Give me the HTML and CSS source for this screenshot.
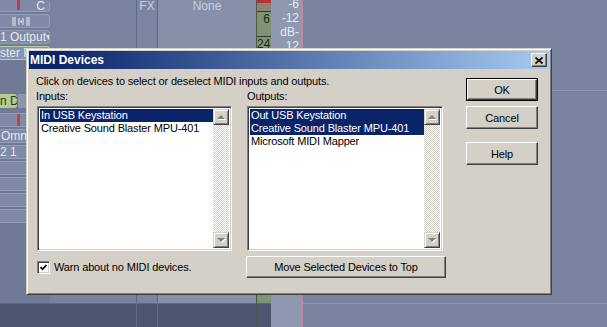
FILE: index.html
```html
<!DOCTYPE html>
<html lang="en">
<head>
    <meta charset="UTF-8">
    <title>MIDI Devices</title>
    <link rel="stylesheet" href="styles.css">
</head>
<body>
    <div class="daw">
        <div class="col strip">
            <div class="cell cell-c"><span class="rec"></span><span class="cell-txt">C</span></div>
            <div class="cell cell-icon">
                <svg width="18" height="11" viewBox="0 0 18 11"><path d="M1 1v9M3 1v9M7 2v7M11 2v7M15 1v9M17 1v9" stroke="#e6eaf2" stroke-width="1"/><rect x="8.5" y="4.5" width="1.5" height="2" fill="#e6eaf2"/></svg>
            </div>
            <div class="cell cell-out"><span>1 Output</span><span class="drop">&#9662;</span></div>
            <div class="cell cell-bus"><span>ster P</span></div>
            <div class="strip-lower">
                <div class="row-nd"><span class="pill">n D</span><span class="mini"></span></div>
                <div class="cell cell-rec"><span class="rec rec-low"></span></div>
                <div class="cell"><span class="omn">Omn</span></div>
                <div class="cell"><span>2 1</span></div>
                <div class="cell"></div>
                <div class="cell"></div>
                <div class="cell"></div>
                <div class="cell"></div>
            </div>
            <div class="fill"></div>
            <div class="foot dark"></div>
        </div>
        <div class="col plain">
            <div class="fill"></div>
            <div class="foot dark"></div>
        </div>
        <div class="col fx">
            <span class="bg-txt">FX</span>
            <div class="fill"></div>
            <div class="foot dark"></div>
        </div>
        <div class="col name">
            <span class="bg-txt">None</span>
            <div class="fill"></div>
            <div class="foot dark"></div>
        </div>
        <div class="col meter">
            <div class="peak"></div>
            <div class="seg seg-top"></div>
            <div class="seg"><span>6</span></div>
            <div class="seg"><span>24</span></div>
            <div class="fill"></div>
            <div class="foot dark"></div>
        </div>
        <div class="col scale">
            <span>-6</span>
            <span>-12</span>
            <span>dB-</span>
            <span>12</span>
        </div>
        <div class="col pink"></div>
        <div class="col rest">
            <div class="rest-top"></div>
            <div class="fill"></div>
            <div class="foot"></div>
        </div>
    </div>

    <div class="dialog">
        <div class="titlebar">
            <span class="title">MIDI Devices</span>
            <span class="close">
                <svg width="8" height="7" viewBox="0 0 8 7"><path d="M0.5 0.5l7 6M7.5 0.5l-7 6" stroke="#000" stroke-width="1.6"/></svg>
            </span>
        </div>
        <div class="dlg-body">
            <div class="main">
                <p class="hint">Click on devices to select or deselect MIDI inputs and outputs.</p>
                <div class="label">Inputs:</div>
                <div class="label label-out">Outputs:</div>
                <div class="listbox list-in">
                    <ul class="items">
                        <li class="sel">In USB Keystation</li>
                        <li>Creative Sound Blaster MPU-401</li>
                    </ul>
                    <div class="scroll">
                        <span class="arrow up"><i></i></span>
                        <span class="track"></span>
                        <span class="arrow down"><i></i></span>
                    </div>
                </div>
                <div class="listbox list-out">
                    <ul class="items">
                        <li class="sel">Out USB Keystation</li>
                        <li class="sel">Creative Sound Blaster MPU-401</li>
                        <li>Microsoft MIDI Mapper</li>
                    </ul>
                    <div class="scroll">
                        <span class="arrow up"><i></i></span>
                        <span class="track"></span>
                        <span class="arrow down"><i></i></span>
                    </div>
                </div>
                <div class="check">
                    <span class="box">
                        <svg width="7" height="7" viewBox="0 0 7 7"><path d="M0.5 3l2 2.2L6.5 1" stroke="#000" stroke-width="1.7" fill="none"/></svg>
                    </span>
                    <span>Warn about no MIDI devices.</span>
                </div>
                <div class="btn move">Move Selected Devices to Top</div>
            </div>
            <div class="side">
                <div class="btn default"><span class="btn-in">OK</span></div>
                <div class="btn">Cancel</div>
                <div class="btn help">Help</div>
            </div>
        </div>
    </div>
</body>
</html>
```

FILE: styles.css
```css
body {
    margin: 0;
    width: 607px;
    height: 327px;
    overflow: hidden;
    position: relative;
    background-color: #77839f;
    font-family: "Liberation Sans", Arial, sans-serif;
    font-size: 11px;
}

/* background: the mixer behind the dialog */
.daw {
    display: flex;
    height: 327px;
}
.col {
    display: flex;
    flex-direction: column;
    height: 327px;
}
.fill {
    flex: 1;
}
.foot {
    height: 23px;
    border-top: 1px solid #8f9ab2;
}
.foot.dark {
    background-color: #4b5670;
    border-top-color: #5e6985;
}
.bg-txt {
    color: #c9d0df;
    font-size: 12px;
    line-height: 12px;
    text-align: center;
}
.strip {
    width: 50px;
    background-color: #6f7b96;
}
.cell {
    height: 12px;
    margin-bottom: 2px;
    background-color: #7f8ba6;
    border: 1px solid #95a0b8;
    border-left: none;
    border-radius: 0 3px 3px 0;
    color: #e4e8f0;
    font-size: 12px;
    line-height: 12px;
    display: flex;
    align-items: center;
    overflow: hidden;
    white-space: nowrap;
}
.cell-c {
    height: 11px;
    border-top: none;
}
.rec {
    width: 3px;
    height: 10px;
    margin-left: 17px;
    background-color: #c0404a;
    align-self: flex-start;
}
.cell-txt {
    margin-left: auto;
    padding-right: 4px;
}
.cell-icon {
    justify-content: center;
    padding-right: 8px;
}
.drop {
    margin-left: auto;
    padding-right: 2px;
    font-size: 10px;
}
.cell-bus {
    border-color: #b6cfa2;
    background-color: #8792ac;
}
.strip-lower {
    margin-top: 32px;
    width: 26px;
    display: flex;
    flex-direction: column;
}
.strip-lower .cell {
    border-radius: 0;
    border-right: none;
}
.omn {
    padding-left: 1px;
}
.row-nd {
    display: flex;
    height: 14px;
    margin-bottom: 5px;
}
.pill {
    width: 17px;
    background-color: #b4cc94;
    border-radius: 0 3px 3px 0;
    color: #2a3a20;
    font-size: 12px;
    line-height: 14px;
    overflow: hidden;
    white-space: nowrap;
}
.mini {
    flex: 1;
    margin-left: 1px;
    background-color: #8c97af;
}
.rec-low {
    height: 13px;
}
.plain {
    width: 86px;
    border-right: 1px solid #5f6a86;
}
.fx {
    width: 20px;
    border-right: 1px solid #5f6a86;
    background-color: #7a86a1;
}
.name {
    width: 98px;
    background-color: #8690a9;
}
.meter {
    width: 14px;
    background-color: #7d9474;
    border-left: 1px solid #4c5a44;
}
.peak {
    height: 3px;
    background-color: #b8303a;
}
.seg {
    height: 24px;
    border-top: 1px solid #2e3a2c;
    color: #1e281c;
    font-size: 12px;
    text-align: right;
    line-height: 14px;
    padding-right: 1px;
}
.seg-top {
    height: 8px;
    background-color: #8f8470;
    border-top: none;
}
.scale {
    width: 30px;
    background-color: #8e98b0;
    color: #e8ecf4;
    font-size: 12px;
    line-height: 14px;
    text-align: right;
    padding-right: 2px;
    box-sizing: border-box;
}
.scale span:first-child {
    margin-top: -3px;
}
.pink {
    width: 2px;
    background-color: #c9849e;
}
.rest {
    flex: 1;
}
.rest-top {
    height: 90px;
    border-bottom: 1px solid #8e99b2;
}

/* the dialog window */
.dialog {
    position: absolute;
    left: 26px;
    top: 48px;
    width: 526px;
    height: 247px;
    box-sizing: border-box;
    padding: 2px;
    background-color: #d4d0c8;
    border: 1px solid;
    border-color: #d4d0c8 #404040 #404040 #d4d0c8;
    box-shadow: inset 1px 1px #ffffff, inset -1px -1px #808080;
    color: #000;
    letter-spacing: -0.15px;
}
.titlebar {
    height: 18px;
    display: flex;
    align-items: center;
    background: linear-gradient(to right, #0a246a 5%, #a6caf0);
    padding: 0 2px 0 1px;
}
.title {
    color: #fff;
    font-weight: bold;
    font-size: 12px;
    letter-spacing: 0;
}
.close {
    margin-left: auto;
    width: 16px;
    height: 14px;
    box-sizing: border-box;
    background-color: #d4d0c8;
    border: 1px solid;
    border-color: #fff #404040 #404040 #fff;
    box-shadow: inset -1px -1px #808080;
    display: flex;
    align-items: center;
    justify-content: center;
    padding-right: 1px;
}
.dlg-body {
    display: flex;
    padding-left: 7px;
}
.main {
    width: 410px;
    display: grid;
    grid-template-columns: 210px 200px;
}
.hint {
    grid-column: 1 / 3;
    margin: 6px 0 0;
    line-height: 13px;
}
.label {
    margin-top: 2px;
    line-height: 13px;
}
.label-out {
    padding-left: 1px;
}
.listbox {
    margin-top: 3px;
    margin-left: 1px;
    height: 145px;
    box-sizing: border-box;
    border: 1px solid;
    border-color: #808080 #fff #fff #808080;
    box-shadow: inset 1px 1px #404040, inset -1px -1px #d4d0c8;
    padding: 2px;
    background-color: #fff;
    display: flex;
}
.list-in {
    width: 195px;
}
.list-out {
    width: 196px;
}
.items {
    flex: 1;
    list-style: none;
    margin: 0;
    padding: 0;
}
.items li {
    height: 13px;
    line-height: 13px;
    padding-left: 1px;
    white-space: nowrap;
}
.items li.sel {
    background-color: #0a246a;
    color: #fff;
}
.scroll {
    width: 16px;
    display: flex;
    flex-direction: column;
}
.track {
    flex: 1;
    background-color: #fff;
    background-image: repeating-conic-gradient(#d4d0c8 0 25%, #ffffff 0 50%);
    background-size: 2px 2px;
}
.arrow {
    height: 16px;
    box-sizing: border-box;
    background-color: #d4d0c8;
    border: 1px solid;
    border-color: #d4d0c8 #404040 #404040 #d4d0c8;
    box-shadow: inset 1px 1px #fff, inset -1px -1px #808080;
    display: flex;
    align-items: center;
    justify-content: center;
}
.arrow i {
    width: 0;
    height: 0;
    border-left: 4px solid transparent;
    border-right: 4px solid transparent;
    filter: drop-shadow(1px 1px 0 #fff);
}
.up i {
    border-bottom: 4px solid #808080;
}
.down i {
    border-top: 4px solid #808080;
}
.check {
    margin-top: 5px;
    margin-left: 1px;
    height: 22px;
    display: flex;
    align-items: center;
    gap: 4px;
}
.box {
    width: 13px;
    height: 13px;
    box-sizing: border-box;
    border: 1px solid;
    border-color: #808080 #fff #fff #808080;
    box-shadow: inset 1px 1px #404040, inset -1px -1px #d4d0c8;
    background-color: #fff;
    display: flex;
    align-items: center;
    justify-content: center;
}
.btn {
    height: 23px;
    box-sizing: border-box;
    border: 1px solid;
    border-color: #fff #404040 #404040 #fff;
    box-shadow: inset -1px -1px #808080;
    background-color: #d4d0c8;
    display: flex;
    align-items: center;
    justify-content: center;
}
.move {
    margin-top: 5px;
    height: 22px;
}
.side {
    width: 72px;
    margin-left: 20px;
    padding-top: 9px;
    display: flex;
    flex-direction: column;
    gap: 5px;
}
.btn.default {
    border: 1px solid #000;
    box-shadow: none;
}
.btn-in {
    width: 100%;
    height: 100%;
    box-sizing: border-box;
    border: 1px solid;
    border-color: #fff #404040 #404040 #fff;
    box-shadow: inset -1px -1px #808080;
    display: flex;
    align-items: center;
    justify-content: center;
}
.btn.help {
    margin-top: 8px;
}
```
